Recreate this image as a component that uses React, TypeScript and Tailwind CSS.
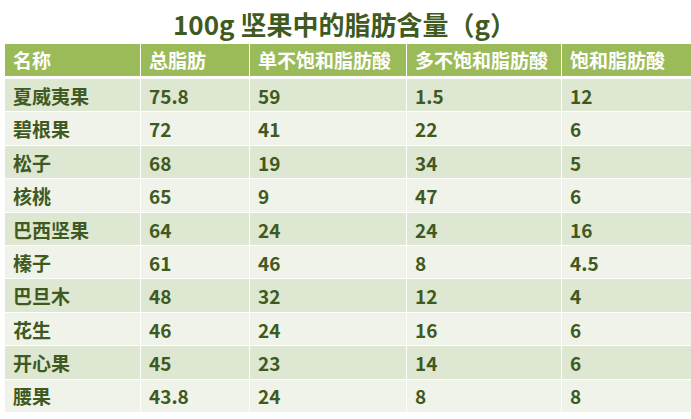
import React from "react";

const headers = ["名称", "总脂肪", "单不饱和脂肪酸", "多不饱和脂肪酸", "饱和脂肪酸"];
const rows: string[][] = [
  ["夏威夷果", "75.8", "59", "1.5", "12"],
  ["碧根果", "72", "41", "22", "6"],
  ["松子", "68", "19", "34", "5"],
  ["核桃", "65", "9", "47", "6"],
  ["巴西坚果", "64", "24", "24", "16"],
  ["榛子", "61", "46", "8", "4.5"],
  ["巴旦木", "48", "32", "12", "4"],
  ["花生", "46", "24", "16", "6"],
  ["开心果", "45", "23", "14", "6"],
  ["腰果", "43.8", "24", "8", "8"],
];
const widths = ["w-[135px]", "w-[109px]", "w-[157px]", "w-[155px]", "flex-1"];

export default function App() {
  return (
    <div
      className="w-[691px] h-[419px] bg-white overflow-hidden"
      style={{ fontFamily: '"Microsoft YaHei", "Noto Sans CJK SC", "Noto Sans", sans-serif' }}
    >
      <div className="h-[44px] flex items-center justify-center pr-[2px] pt-[4px] text-[26px] font-bold text-[#3F5A20] leading-none">
        100g 坚果中的脂肪含量（g）
      </div>
      <div className="ml-[5px] flex flex-col">
        <div className="flex h-[32px] bg-[#9BBB59] text-white text-[19px] font-bold">
          {headers.map((h, i) => (
            <div
              key={i}
              className={`${widths[i]} flex items-center pl-[8px] ${i > 0 ? "border-l-[1.5px] border-white" : ""}`}
            >
              {h}
            </div>
          ))}
        </div>
        <div className="h-[2px] bg-white" />
        {rows.map((r, ri) => (
          <div
            key={ri}
            className={`flex h-[33.4px] border-t border-white text-[19px] font-bold text-[#3F5A20] ${
              ri % 2 === 0 ? "bg-[#DEE7D1]" : "bg-[#EFF3EA]"
            }`}
          >
            {r.map((c, ci) => (
              <div
                key={ci}
                className={`${widths[ci]} flex items-center pl-[8px] pt-[2px] ${ci > 0 ? "border-l-[1.5px] border-white" : ""}`}
              >
                {c}
              </div>
            ))}
          </div>
        ))}
      </div>
    </div>
  );
}
